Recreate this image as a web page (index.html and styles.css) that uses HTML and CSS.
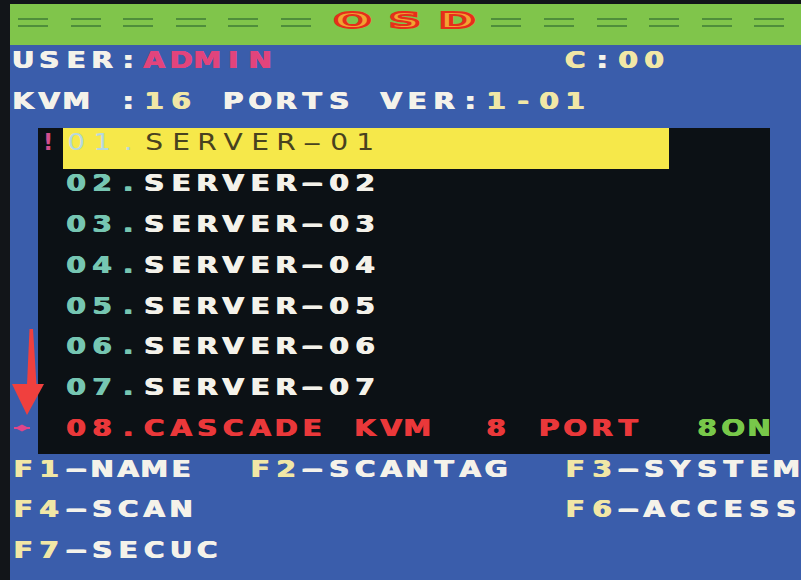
FILE: index.html
```html
<!DOCTYPE html>
<html>
<head>
<meta charset="utf-8">
<title>OSD</title>
<link rel="stylesheet" href="styles.css">
</head>
<body>
<div class="screen">
  <div class="head">
    <span class="hc"><span class="eq"></span></span>
    <span class="hc"><span class="eq"></span></span>
    <span class="hc"><span class="eq"></span></span>
    <span class="hc"><span class="eq"></span></span>
    <span class="hc"><span class="eq"></span></span>
    <span class="hc"><span class="eq"></span></span>
    <span class="hc"><span class="big">O</span></span>
    <span class="hc"><span class="big">S</span></span>
    <span class="hc"><span class="big">D</span></span>
    <span class="hc"><span class="eq"></span></span>
    <span class="hc"><span class="eq"></span></span>
    <span class="hc"><span class="eq"></span></span>
    <span class="hc"><span class="eq"></span></span>
    <span class="hc"><span class="eq"></span></span>
    <span class="hc"><span class="eq"></span></span>
  </div>

  <div class="ln top">
    <i>U</i><i>S</i><i>E</i><i>R</i><i>:</i><i class="p">A</i><i class="p">D</i><i class="p">M</i><i class="p">I</i><i class="p">N</i>
    <i></i><i></i><i></i><i></i><i></i><i></i><i></i><i></i><i></i><i></i><i></i>
    <i class="y">C</i><i>:</i><i class="y">0</i><i class="y">0</i>
  </div>
  <div class="ln">
    <i>K</i><i>V</i><i>M</i><i></i><i>:</i><i class="y">1</i><i class="y">6</i><i></i><i>P</i><i>O</i><i>R</i><i>T</i><i>S</i><i></i><i>V</i><i>E</i><i>R</i><i>:</i><i class="y">1</i><i class="y">-</i><i class="y">0</i><i class="y">1</i>
  </div>

  <div class="panel">
    <div class="row">
      <span class="mk">!</span>
      <div class="bar sel">
        <i class="n">0</i><i class="n">1</i><i class="n">.</i><i>S</i><i>E</i><i>R</i><i>V</i><i>E</i><i>R</i><i class="h">-</i><i>0</i><i>1</i>
      </div>
    </div>
    <div class="row">
      <span class="mk"></span>
      <div class="bar">
        <i class="t">0</i><i class="t">2</i><i class="t">.</i><i>S</i><i>E</i><i>R</i><i>V</i><i>E</i><i>R</i><i class="h">-</i><i>0</i><i>2</i>
      </div>
    </div>
    <div class="row">
      <span class="mk"></span>
      <div class="bar">
        <i class="t">0</i><i class="t">3</i><i class="t">.</i><i>S</i><i>E</i><i>R</i><i>V</i><i>E</i><i>R</i><i class="h">-</i><i>0</i><i>3</i>
      </div>
    </div>
    <div class="row">
      <span class="mk"></span>
      <div class="bar">
        <i class="t">0</i><i class="t">4</i><i class="t">.</i><i>S</i><i>E</i><i>R</i><i>V</i><i>E</i><i>R</i><i class="h">-</i><i>0</i><i>4</i>
      </div>
    </div>
    <div class="row">
      <span class="mk"></span>
      <div class="bar">
        <i class="t">0</i><i class="t">5</i><i class="t">.</i><i>S</i><i>E</i><i>R</i><i>V</i><i>E</i><i>R</i><i class="h">-</i><i>0</i><i>5</i>
      </div>
    </div>
    <div class="row">
      <span class="mk"></span>
      <div class="bar">
        <i class="t">0</i><i class="t">6</i><i class="t">.</i><i>S</i><i>E</i><i>R</i><i>V</i><i>E</i><i>R</i><i class="h">-</i><i>0</i><i>6</i>
      </div>
    </div>
    <div class="row">
      <span class="mk"></span>
      <div class="bar">
        <i class="t">0</i><i class="t">7</i><i class="t">.</i><i>S</i><i>E</i><i>R</i><i>V</i><i>E</i><i>R</i><i class="h">-</i><i>0</i><i>7</i>
      </div>
    </div>
    <div class="row">
      <span class="mk"></span>
      <div class="bar red">
        <i>0</i><i>8</i><i>.</i><i>C</i><i>A</i><i>S</i><i>C</i><i>A</i><i>D</i><i>E</i><i></i><i>K</i><i>V</i><i>M</i><i></i><i></i><i>8</i><i></i><i>P</i><i>O</i><i>R</i><i>T</i><i></i><i></i><i class="g">8</i><i class="g">O</i><i class="g">N</i>
      </div>
    </div>
  </div>

  <div class="ln fk">
    <i class="y">F</i><i class="y">1</i><i class="h">-</i><i>N</i><i>A</i><i>M</i><i>E</i>
    <i></i><i></i>
    <i class="y">F</i><i class="y">2</i><i class="h">-</i><i>S</i><i>C</i><i>A</i><i>N</i><i>T</i><i>A</i><i>G</i>
    <i></i><i></i>
    <i class="y">F</i><i class="y">3</i><i class="h">-</i><i>S</i><i>Y</i><i>S</i><i>T</i><i>E</i><i>M</i>
  </div>
  <div class="ln">
    <i class="y">F</i><i class="y">4</i><i class="h">-</i><i>S</i><i>C</i><i>A</i><i>N</i>
    <i></i><i></i><i></i><i></i><i></i><i></i><i></i><i></i><i></i><i></i><i></i><i></i><i></i><i></i>
    <i class="y">F</i><i class="y">6</i><i class="h">-</i><i>A</i><i>C</i><i>C</i><i>E</i><i>S</i><i>S</i>
  </div>
  <div class="ln">
    <i class="y">F</i><i class="y">7</i><i class="h">-</i><i>S</i><i>E</i><i>C</i><i>U</i><i>C</i>
  </div>
</div>

<svg class="arrow" width="50" height="112" viewBox="0 0 50 112">
  <polygon points="21.5,4 25,4 28.5,60 19,60" fill="#f0403e"/>
  <polygon points="4,59 36,59 19,90" fill="#f0403e"/>
  <polygon points="7,103 14,99.5 21,103 14,106.5" fill="#e0468a"/>
  <rect x="6" y="102" width="16" height="2" fill="#e0468a"/>
</svg>
</body>
</html>
```

FILE: styles.css
```css
body {
  margin: 0;
  width: 801px;
  height: 580px;
  overflow: hidden;
  position: relative;
  background: #121519;
  font-family: "DejaVu Sans", "Liberation Sans", sans-serif;
  font-weight: bold;
  font-size: 22.5px;
}

.screen {
  margin: 4px 0 0 10px;
  height: 576px;
  background: #3a5dab;
  color: #f4f2ea;
  overflow: hidden;
}

.head {
  height: 41px;
  background: #80c54b;
  display: flex;
  align-items: center;
  padding-bottom: 8px;
  box-sizing: border-box;
}

.hc {
  width: 52.6px;
  flex: none;
  display: flex;
  justify-content: center;
}

.eq {
  display: block;
  width: 30px;
  height: 5px;
  border-top: 2.5px solid #4f8e3b;
  border-bottom: 2.5px solid #4f8e3b;
  margin: 3px 6.6px 0 0;
}

.big {
  display: block;
  font-size: 22px;
  line-height: 1;
  color: #f2a232;
  -webkit-text-stroke: 2px #e62e1a;
  transform: scaleX(2);
}

.ln {
  display: flex;
  align-items: center;
  height: 40.8px;
}

.ln.top {
  height: 35.4px;
  padding-bottom: 5.4px;
  box-sizing: border-box;
}

.ln.fk {
  height: 34px;
  padding-bottom: 5px;
  box-sizing: border-box;
}

.ln i,
.bar i {
  font-style: normal;
  display: block;
  flex: none;
  width: 26.3px;
  text-align: center;
  line-height: 24px;
  transform: scaleX(1.25);
  text-shadow: 0.5px 0 0 currentColor, -0.4px 0 0 currentColor;
}

.ln i.h,
.bar i.h {
  transform: scaleX(2.5);
}

.y { color: #f1e7a6; }
.p { color: #e2447c; }
.t { color: #76c6b2; }
.g { color: #78c84a !important; }

.panel {
  margin: 6.8px 0 0 28px;
  width: 732px;
  background: #0c1115;
}

.row {
  display: flex;
  height: 40.8px;
}

.mk {
  width: 24.6px;
  flex: none;
  display: flex;
  align-items: center;
  padding: 0 0 12px 5px;
  box-sizing: border-box;
  color: #d24e8e;
}

.bar {
  display: flex;
  align-items: center;
  padding-bottom: 12px;
  box-sizing: border-box;
}

.bar.sel {
  width: 606px;
  background: #f6e84a;
  font-weight: normal;
  color: #48421f;
}

.bar.sel i { text-shadow: none; }

.bar.sel .n { color: #b6d9de; }

.bar.red { color: #ea383a; }

.arrow {
  position: absolute;
  left: 8px;
  top: 325px;
}
```
